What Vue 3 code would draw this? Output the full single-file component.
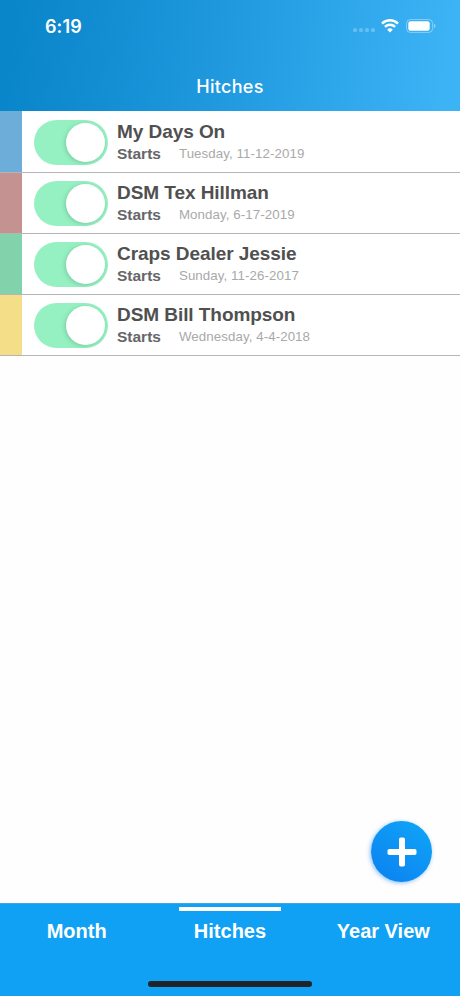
<template>
  <div class="screen">
    <header class="header">
      <div class="status-bar">
        <span class="time">6:19</span>
        <div class="status-icons">
          <span class="signal">
            <i v-for="n in 4" :key="n"></i>
          </span>
          <svg class="wifi" width="18" height="14" viewBox="0 0 18 14" fill="none">
            <path d="M1 4.6a11.4 11.4 0 0 1 16 0" stroke="#fff" stroke-width="2.5" />
            <path d="M3.9 7.9a7.3 7.3 0 0 1 10.2 0" stroke="#fff" stroke-width="2.4" />
            <path d="M9 13.5 6.2 10.7a4 4 0 0 1 5.6 0z" fill="#fff" />
          </svg>
          <svg class="battery" width="30" height="14" viewBox="0 0 30 14">
            <rect x="0.6" y="0.6" width="26" height="12.8" rx="3.8" fill="none" stroke="#fff" stroke-opacity="0.4" stroke-width="1" />
            <rect x="2.3" y="2.3" width="21.4" height="9.4" rx="2.2" fill="#fff" />
            <path d="M28 4.8c1.9.7 1.9 3.7 0 4.4z" fill="#fff" fill-opacity="0.45" />
          </svg>
        </div>
      </div>
      <h1 class="title">Hitches</h1>
    </header>

    <main class="content">
      <ul class="hitch-list">
        <li v-for="hitch in hitches" :key="hitch.name" class="hitch">
          <span class="stripe" :style="{ backgroundColor: hitch.color }"></span>
          <button
            class="toggle"
            :class="{ on: hitch.enabled }"
            role="switch"
            :aria-checked="hitch.enabled"
            @click="hitch.enabled = !hitch.enabled"
          >
            <span class="knob"></span>
          </button>
          <div class="info">
            <h2 class="name">{{ hitch.name }}</h2>
            <p class="starts">
              <b>Starts</b>
              <span>{{ hitch.starts }}</span>
            </p>
          </div>
        </li>
      </ul>

      <!-- Floating add button -->
      <button class="add-button">
        <svg width="30" height="30" viewBox="0 0 30 30">
          <rect x="12" y="0.5" width="6" height="29" rx="1.8" fill="#fff" />
          <rect x="0.5" y="12" width="29" height="6" rx="1.8" fill="#fff" />
        </svg>
      </button>
    </main>

    <nav class="tab-bar">
      <div class="tabs">
        <button
          v-for="tab in tabs"
          :key="tab"
          class="tab"
          :class="{ active: tab === activeTab }"
          @click="activeTab = tab"
        >
          {{ tab }}
        </button>
      </div>
      <span class="home-indicator"></span>
    </nav>
  </div>
</template>

<script setup>
import { ref } from 'vue'

const hitches = ref([
  { name: 'My Days On', starts: 'Tuesday, 11-12-2019', color: '#6dadd9', enabled: true },
  { name: 'DSM Tex Hillman', starts: 'Monday, 6-17-2019', color: '#c39291', enabled: true },
  { name: 'Craps Dealer Jessie', starts: 'Sunday, 11-26-2017', color: '#82d2ab', enabled: true },
  { name: 'DSM Bill Thompson', starts: 'Wednesday, 4-4-2018', color: '#f5de88', enabled: true }
])

const tabs = ['Month', 'Hitches', 'Year View']
const activeTab = ref('Hitches')
</script>

<style>
body {
  margin: 0;
  background: #fff;
}
</style>

<style scoped>
.screen {
  display: flex;
  flex-direction: column;
  width: 460px;
  height: 996px;
  overflow: hidden;
  background: #fefefe;
  font-family: "Liberation Sans", Arial, sans-serif;
}

button {
  border: 0;
  padding: 0;
  font: inherit;
}

.header {
  flex: none;
  height: 111px;
  box-sizing: border-box;
  background: linear-gradient(97deg, #0985c9 3%, #1f98de 47%, #3cb3f5 96%);
  color: #fff;
  font-family: Inter, "Liberation Sans", sans-serif;
}

.status-bar {
  display: flex;
  justify-content: space-between;
  align-items: center;
  height: 51px;
  padding: 0 24px 0 45px;
}

.time {
  margin-top: 1px;
  font-size: 18px;
  font-weight: 600;
  letter-spacing: 0.1px;
}

.status-icons {
  display: flex;
  align-items: center;
}

.signal {
  display: flex;
  gap: 2px;
  margin: 9px 6px 0 0;
}

.signal i {
  width: 4px;
  height: 4px;
  border-radius: 1.5px;
  background: rgba(255, 255, 255, 0.25);
}

.wifi {
  margin-right: 7px;
}

.title {
  margin: 24px 0 0;
  font-size: 18px;
  font-weight: 550;
  letter-spacing: 0.3px;
  line-height: 24px;
  text-align: center;
}

.content {
  position: relative;
  flex: 1;
}

.hitch-list {
  margin: 0;
  padding: 0;
  list-style: none;
}

.hitch {
  display: flex;
  align-items: center;
  height: 61px;
  box-sizing: border-box;
  border-bottom: 1px solid #b5b5b5;
  background: #fff;
}

.hitch:first-child {
  height: 62px;
}

.stripe {
  align-self: stretch;
  width: 22px;
  margin-right: 12px;
}

.toggle {
  display: flex;
  align-items: center;
  width: 73.5px;
  height: 45px;
  padding: 0 2.5px;
  border-radius: 23px;
  background: #ddd;
}

.hitch:first-child .toggle {
  margin-top: 1px;
}

.toggle.on {
  justify-content: flex-end;
  background: #96f1c2;
}

.knob {
  width: 39px;
  height: 39px;
  border-radius: 50%;
  background: #fff;
  box-shadow: -1px 1px 4px rgba(30, 90, 60, 0.25);
}

.info {
  margin: 2px 0 0 9.5px;
}

.name {
  margin: 0;
  color: #505050;
  font-size: 19px;
  letter-spacing: -0.06px;
  line-height: 22px;
}

.starts {
  display: flex;
  align-items: center;
  gap: 18px;
  margin: 0;
  line-height: 22px;
}

.starts b {
  color: #66666a;
  font-size: 15.5px;
}

.starts span {
  color: #a9a9a9;
  font-size: 13.3px;
  letter-spacing: 0.08px;
}

/* Sits over the list, bottom right */
.add-button {
  position: absolute;
  right: 28px;
  bottom: 21px;
  display: flex;
  align-items: center;
  justify-content: center;
  width: 61px;
  height: 61px;
  border-radius: 50%;
  background: linear-gradient(35deg, #0b80f0, #10a6f7);
  box-shadow: -1px 1px 4px rgba(20, 130, 240, 0.5);
}

.tab-bar {
  display: flex;
  flex: none;
  flex-direction: column;
  align-items: center;
  justify-content: space-between;
  height: 93px;
  box-sizing: border-box;
  padding-bottom: 9px;
  border-top: 1px solid #43a5df;
  background: #10a1f5;
}

.tabs {
  display: grid;
  grid-template-columns: repeat(3, 1fr);
  width: 100%;
}

.tab {
  display: flex;
  flex-direction: column;
  align-items: center;
  gap: 8px;
  padding-top: 3px;
  background: none;
  color: #fff;
  font-size: 20px;
  font-weight: 700;
  line-height: 24px;
}

.tab::before {
  content: '';
  width: 102px;
  height: 4px;
}

.tab.active::before {
  background: #fff;
}

.home-indicator {
  width: 164px;
  height: 6px;
  border-radius: 3px;
  background: #1d252b;
}
</style>
